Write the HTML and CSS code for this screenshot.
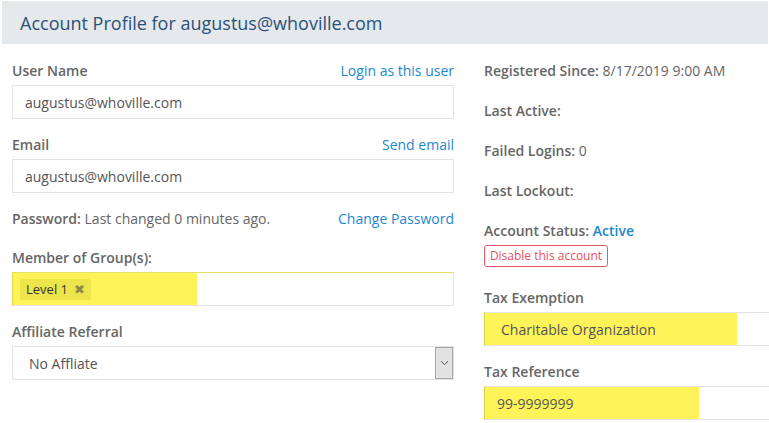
FILE: index.html
```html
<!DOCTYPE html>
<html lang="en">
<head>
<meta charset="utf-8">
<title>Account Profile</title>
<link rel="stylesheet" href="styles.css">
</head>
<body>
<div class="page">
  <div class="header">Account Profile for augustus@whoville.com</div>
  <div class="content">
    <div class="col">
      <div class="field">
        <div class="label-row"><span class="label">User Name</span><a class="link" href="#">Login as this user</a></div>
        <div class="input">augustus@whoville.com</div>
      </div>
      <div class="field">
        <div class="label-row"><span class="label">Email</span><a class="link" href="#">Send email</a></div>
        <div class="input">augustus@whoville.com</div>
      </div>
      <div class="label-row pw-row"><span class="text"><span class="label">Password:</span> Last changed 0 minutes ago.</span><a class="link" href="#">Change Password</a></div>
      <div class="field">
        <div class="label-row"><span class="label">Member of Group(s):</span></div>
        <div class="input tags hl-member"><span class="tag">Level 1 <span class="tag-x">&#x2716;</span></span></div>
      </div>
      <div class="field">
        <div class="label-row"><span class="label">Affiliate Referral</span></div>
        <div class="input select"><span class="select-text">No Affliate</span><span class="select-arrow"><svg width="9" height="6" viewBox="0 0 9 6"><path d="M1 1.2 L4.5 4.6 L8 1.2" fill="none" stroke="#555" stroke-width="1"/></svg></span></div>
      </div>
    </div>
    <div class="col">
      <div class="info"><span class="label">Registered Since:</span> 8/17/2019 9:00 AM</div>
      <div class="info"><span class="label">Last Active:</span></div>
      <div class="info"><span class="label">Failed Logins:</span> 0</div>
      <div class="info"><span class="label">Last Lockout:</span></div>
      <div class="info status"><span class="label">Account Status:</span> <span class="active">Active</span></div>
      <button class="disable" type="button">Disable this account</button>
      <div class="field tax">
        <div class="label-row"><span class="label">Tax Exemption</span></div>
        <div class="input open hl-tax pad-tax">Charitable Organization</div>
      </div>
      <div class="field">
        <div class="label-row"><span class="label">Tax Reference</span></div>
        <div class="input open hl-ref pad-ref">99-9999999</div>
      </div>
    </div>
  </div>
</div>
</body>
</html>
```
FILE: styles.css
```css
html, body {
  margin: 0;
  padding: 0;
  background: #fff;
}
body {
  width: 769px;
  height: 423px;
  overflow: hidden;
  font-family: "Open Sans", "Noto Sans", sans-serif;
  font-size: 14px;
  color: #666;
}
.page {
  padding-top: 1px;
}
.header {
  margin-left: 2px;
  margin-right: 1px;
  height: 43px;
  line-height: 44px;
  padding-left: 18px;
  background: #e5e9ec;
  color: #2b5178;
  font-size: 18px;
  white-space: nowrap;
}
.content {
  display: grid;
  grid-template-columns: 442px 1fr;
  column-gap: 30px;
  padding: 17px 0 0 12px;
}
.col {
  display: flex;
  flex-direction: column;
  min-width: 0;
}
.field {
  margin-bottom: 16px;
}
.label-row {
  display: flex;
  justify-content: space-between;
  align-items: baseline;
  height: 20px;
  line-height: 20px;
  margin-bottom: 4px;
  white-space: nowrap;
}
.label {
  font-weight: 600;
  color: #666;
}
.link {
  color: #1e88cf;
  text-decoration: none;
}
.pw-row {
  margin-bottom: 19px;
}
.input {
  box-sizing: border-box;
  height: 34px;
  border: 1px solid #e3e3e3;
  padding: 0 12px;
  line-height: 33px;
  color: #555;
  background: #fff;
  white-space: nowrap;
}
.tags {
  display: flex;
  align-items: center;
  padding-left: 7px;
}
.hl-member {
  background: linear-gradient(to right, #fff35a 0 184px, #fff 184px);
  border-color: #e6e06a #e3e3e3 #e3e3e3 #e0d850;
}
.tag {
  display: inline-flex;
  align-items: center;
  height: 21px;
  line-height: 21px;
  padding: 0 6px;
  background: #ede54c;
  border-radius: 2px;
  color: #333;
  font-size: 13px;
}
.tag-x {
  margin-left: 6px;
  color: #8c8845;
  font-size: 13px;
}
.select {
  display: flex;
  align-items: center;
  justify-content: space-between;
  padding: 0 0 0 16px;
}
.select-arrow {
  box-sizing: border-box;
  width: 18px;
  height: 32px;
  background: #e2e2e2;
  border: 1px solid #a8a8a8;
  display: flex;
  align-items: center;
  justify-content: center;
}
.info {
  height: 20px;
  line-height: 20px;
  margin-bottom: 20px;
  white-space: nowrap;
}
.status {
  margin-bottom: 4px;
}
.active {
  color: #1e88cf;
  font-weight: 600;
}
.disable {
  align-self: flex-start;
  box-sizing: border-box;
  height: 22px;
  width: 124px;
  padding: 0;
  margin: 0 0 21px 0;
  border: 1px solid #ea5868;
  border-radius: 3px;
  background: #fff;
  color: #e8505f;
  font-family: "Open Sans", "Noto Sans", sans-serif;
  font-size: 12px;
  line-height: 20px;
}
.tax {
  margin-bottom: 16px;
}
.open {
  border-right: none;
}
.pad-tax {
  padding-left: 16px;
}
.pad-ref {
  padding-left: 12px;
}
.hl-tax {
  background: linear-gradient(to right, #fff35a 0 252px, #fff 252px);
  border-left-color: #d8d24a;
}
.hl-ref {
  background: linear-gradient(to right, #fff35a 0 214px, #fff 214px);
  border-left-color: #d8d24a;
}
```
